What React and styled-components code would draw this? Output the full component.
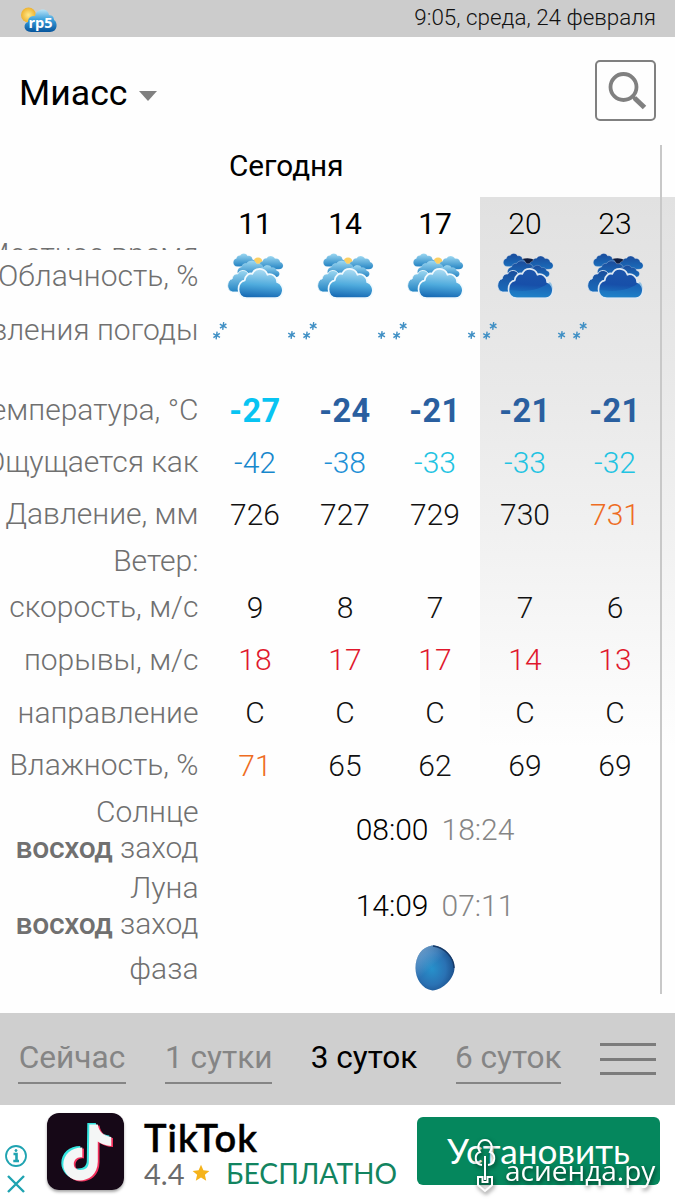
import React from "react";
import styled, { createGlobalStyle } from "styled-components";

const HOURS = [
  { hour: "11", night: false },
  { hour: "14", night: false },
  { hour: "17", night: false },
  { hour: "20", night: true },
  { hour: "23", night: true },
];

const BLACK = "#111";
const RED = "#e0182d";
const ORANGE = "#ee6c22";

const TEMPERATURE = [
  ["-27", "#08c4f2"],
  ["-24", "#2a5f9f"],
  ["-21", "#2a5f9f"],
  ["-21", "#2a5f9f"],
  ["-21", "#2a5f9f"],
];

const FEELS = [
  ["-42", "#1787cc"],
  ["-38", "#1e90d6"],
  ["-33", "#22c3e2"],
  ["-33", "#22c3e2"],
  ["-32", "#22c3e2"],
];

const PRESSURE = [
  ["726", BLACK],
  ["727", BLACK],
  ["729", BLACK],
  ["730", BLACK],
  ["731", ORANGE],
];

const SPEED = ["9", "8", "7", "7", "6"].map((v) => [v, BLACK]);
const GUSTS = ["18", "17", "17", "14", "13"].map((v) => [v, RED]);
const DIRECTION = ["С", "С", "С", "С", "С"].map((v) => [v, BLACK]);
const HUMIDITY = [
  ["71", ORANGE],
  ["65", BLACK],
  ["62", BLACK],
  ["69", BLACK],
  ["69", BLACK],
];

const CLOUD =
  "M13 40 C5 40 1 35 1 29 C1 23 5 19 10 18 C11 12 16 9 21 10 C25 2 39 2 43 11 C50 9 57 14 57 20 C64 22 66 28 65 32 C64 37 60 40 54 40 Z";

const CloudIcon = ({ night, id }) => {
  const front = `front-${id}`;
  const back = `back-${id}`;
  const edge = night ? "#dfe8f2" : "#f2fafe";
  return (
    <svg width="58" height="50" viewBox="0 0 58 50">
      <defs>
        <linearGradient id={front} x1="0.1" y1="0" x2="0" y2="1">
          <stop offset="0" stopColor={night ? "#1c55ab" : "#a9daf2"} />
          <stop offset="0.5" stopColor={night ? "#174fa9" : "#4fabdd"} />
          <stop offset="1" stopColor={night ? "#1d86cc" : "#0b5fae"} />
        </linearGradient>
        <linearGradient id={back} x1="0" y1="0" x2="0" y2="1">
          <stop offset="0" stopColor={night ? "#1a4c9c" : "#9bd7f1"} />
          <stop offset="1" stopColor={night ? "#1a6dbb" : "#2383c3"} />
        </linearGradient>
      </defs>
      {night ? (
        <path d="M26 8 q7 -2 13 1 l-3 6 h-8z" fill="#101c3c" />
      ) : (
        <circle cx="32" cy="11" r="4.6" fill="#fbcf63" />
      )}
      <g
        fill={`url(#${back})`}
        stroke={edge}
        strokeWidth="1"
        strokeOpacity={night ? 0.7 : 0.3}
      >
        <path transform="translate(7 1) scale(.34 .36)" d={CLOUD} />
        <path transform="translate(33 3.5) scale(.37 .37)" d={CLOUD} />
        <path transform="translate(11 8) scale(.46 .44)" d={CLOUD} />
        <path transform="translate(30 13) scale(.36 .33)" d={CLOUD} />
      </g>
      <g stroke={edge}>
        <path
          transform="translate(1.2 17) scale(.5 .6)"
          d={CLOUD}
          fill={`url(#${back})`}
          strokeWidth="1.6"
        />
        <path
          transform="translate(11.8 14.500) scale(.69 .82)"
          d={CLOUD}
          fill={`url(#${front})`}
          strokeWidth="2.4"
        />
      </g>
      {night && (
        <path
          d="M26 40 C38 40 48 36 54 31 C56.500 33 57 37 56 40 C55 45 52 46.500 48 46.500 H22 C17 46.500 13 43 13 39 Z"
          fill="#2188ce"
          opacity="0.4"
        />
      )}
    </svg>
  );
};

const Flake = ({ x, y }) => (
  <path
    transform={`translate(${x} ${y})`}
    d="M0.5 -3.8 L-0.5 3.8 M-3.4 -1.8 L3.4 1.8 M-3.2 2.2 L3.2 -2.2"
    stroke="#3f8fc4"
    strokeWidth="1.4"
    fill="none"
  />
);

const SnowIcon = ({ last }) => (
  <svg width="90" height="30" viewBox="0 0 90 30">
    <Flake x={6.6} y={20.5} />
    <Flake x={13.2} y={11} />
    {!last && <Flake x={81.6} y={20} />}
  </svg>
);

const MOON =
  "M18 1.5 C27 1 40 11 40.500 23 C41 34 29 46 18.500 46.500 C8 45 1.500 35 1.500 24 C1.500 12 8 3 18 1.500 Z";

const MoonIcon = () => (
  <svg width="42" height="48" viewBox="0 0 42 48">
    <defs>
      <radialGradient id="moon" cx="0.42" cy="0.52" r="0.65">
        <stop offset="0" stopColor="#2791cb" />
        <stop offset="0.55" stopColor="#2a72b4" />
        <stop offset="1" stopColor="#184680" />
      </radialGradient>
      <linearGradient id="moonShine" x1="0" y1="0" x2="0.4" y2="0.5">
        <stop offset="0" stopColor="#a6cdea" stopOpacity="0.7" />
        <stop offset="1" stopColor="#a6cdea" stopOpacity="0" />
      </linearGradient>
    </defs>
    <path d={MOON} fill="url(#moon)" />
    <path d={MOON} fill="url(#moonShine)" />
    <path d="M19 2 C30 3 40 13 40 24" stroke="#163a68" strokeWidth="1.4" fill="none" />
  </svg>
);

const LogoIcon = () => (
  <svg width="38" height="28" viewBox="0 0 38 28">
    <defs>
      <linearGradient id="logoCloud" x1="0" y1="0" x2="0" y2="1">
        <stop offset="0" stopColor="#b9e3f6" />
        <stop offset="0.45" stopColor="#3ba0dc" />
        <stop offset="1" stopColor="#06549c" />
      </linearGradient>
      <radialGradient id="logoSun">
        <stop offset="0" stopColor="#ffe98a" />
        <stop offset="1" stopColor="#eeb22f" />
      </radialGradient>
    </defs>
    <circle cx="8.500" cy="9" r="7.500" fill="url(#logoSun)" />
    <path
      d="M11 26 C3 26 3 17 8 16 C8 10 13 10 15 10 C16 2 28 1 29 9 C33 9 34 12 34 14 C38 16 38 26 30 26 Z"
      fill="url(#logoCloud)"
    />
    <text
      x="20.500"
      y="21.500"
      textAnchor="middle"
      fontFamily="Open Sans, sans-serif"
      fontSize="14.500"
      fontWeight="700"
      fill="#fff"
    >
      rp5
    </text>
  </svg>
);

const SearchIcon = () => (
  <svg width="58" height="58" viewBox="0 0 58 58" fill="none" stroke="#808080">
    <circle cx="26.500" cy="25" r="13" strokeWidth="3.800" />
    <path d="M35.500 34 L38 36.500" strokeWidth="3.200" />
    <path d="M37.500 36 L47.500 45.500" strokeWidth="5" />
  </svg>
);

const NOTE =
  "M40 10 H48.500 C49.500 17 54 21.500 62 22.500 V31.500 C56.500 31.500 52 29.700 48.500 27.200 V47 C48.500 60 39 66 30.500 66 C21 66 14 58.500 14 50 C14 40 22 33 33 33 V43 C28 42 24.500 45.500 24.500 49.500 C24.500 53 27 55.500 31 55.500 C36.500 55.500 39.500 52.500 39.500 47.500 Z";

const TikTokIcon = () => (
  <svg width="77" height="77" viewBox="0 0 77 77">
    <rect width="77" height="77" rx="12" fill="#160817" />
    <path transform="translate(0.3 0)" d={NOTE} fill="#35e5e0" />
    <path transform="translate(4 2.500)" d={NOTE} fill="#f2305c" />
    <path transform="translate(2.300 1.400)" d={NOTE} fill="#f4f6f6" />
  </svg>
);

const StarIcon = () => (
  <svg width="18" height="18" viewBox="0 0 18 18">
    <path
      d="M9 0.800 L11.400 6.300 L17.400 6.900 L12.900 10.800 L14.200 16.700 L9 13.600 L3.800 16.700 L5.100 10.800 L0.600 6.900 L6.600 6.300 Z"
      fill="#f5b31b"
    />
  </svg>
);

const InfoIcon = () => (
  <svg width="24" height="24" viewBox="0 0 24 24" fill="none" stroke="#1fa3b1">
    <circle cx="12" cy="12" r="10" strokeWidth="1.8" />
    <path d="M9.500 10 H12.500 V17 M9.300 17 H15" strokeWidth="2.600" />
    <circle cx="12" cy="6.500" r="1" fill="#1fa3b1" />
  </svg>
);

const CloseIcon = () => (
  <svg width="24" height="24" viewBox="0 0 24 24" stroke="#1fa3b1" strokeWidth="2.400">
    <path d="M4 4 L20 20 M20 4 L4 20" />
  </svg>
);

const ShovelIcon = () => (
  <svg width="24" height="56" viewBox="0 0 24 56" fill="none" stroke="#fff" strokeWidth="2">
    <path d="M9 27 C1 26 1 16 7 14 C3 8 7 2 12 2 C17 2 21 8 17 14 C23 16 23 26 15 27" />
    <path d="M12 18 V42 M5 39 H9.500 V44 H14.500 V39 H19 V47 L12 53 L5 47 Z" />
  </svg>
);

const ValueRow = ({ label, values, height, bold }) => (
  <Row $height={height}>
    <Label>{label}</Label>
    {values.map(([value, color], i) => (
      <Cell key={i} $color={color} $bold={bold}>
        {value}
      </Cell>
    ))}
  </Row>
);

const App = () => (
  <>
    <GlobalStyle />
    <Screen>
      <StatusBar>
        <LogoIcon />
        <span>9:05, среда, 24 февраля</span>
      </StatusBar>

      <Header>
        <City>
          Миасс
          <Arrow />
        </City>
        <SearchButton>
          <SearchIcon />
        </SearchButton>
      </Header>

      <Forecast>
        <Table>
          <Today>Сегодня</Today>
          <Row $height={53} $clip>
            <LowLabel>Местное время</LowLabel>
            {HOURS.map(({ hour, night }) => (
              <Hour key={hour} $night={night}>
                {hour}
              </Hour>
            ))}
          </Row>
          <Row $height={52}>
            <Label>Облачность, %</Label>
            {HOURS.map(({ hour, night }) => (
              <Cell key={hour}>
                <CloudIcon night={night} id={hour} />
              </Cell>
            ))}
          </Row>
          <Row $height={55}>
            <Label>Явления погоды</Label>
            {HOURS.map(({ hour }, i) => (
              <Cell key={hour}>
                <SnowIcon last={i === HOURS.length - 1} />
              </Cell>
            ))}
          </Row>
          <Gap />
          <ValueRow label="Температура, °C" values={TEMPERATURE} height={52} bold />
          <ValueRow label="Ощущается как" values={FEELS} height={52} />
          <ValueRow label="Давление, мм" values={PRESSURE} height={52} />
          <ValueRow label="Ветер:" values={[]} height={41} />
          <ValueRow label="скорость, м/с" values={SPEED} height={52} />
          <ValueRow label="порывы, м/с" values={GUSTS} height={53} />
          <ValueRow label="направление" values={DIRECTION} height={53} />
          <ValueRow label="Влажность, %" values={HUMIDITY} height={52} />
          <Row $height={76}>
            <Label $shift={2}>
              Солнце
              <br />
              <b>восход</b> заход
            </Label>
            <Wide>
              08:00 <Muted>18:24</Muted>
            </Wide>
          </Row>
          <Row $height={76}>
            <Label $shift={2}>
              Луна
              <br />
              <b>восход</b> заход
            </Label>
            <Wide>
              14:09 <Muted>07:11</Muted>
            </Wide>
          </Row>
          <Row $height={50}>
            <Label $shift={2}>фаза</Label>
            <Wide>
              <MoonIcon />
            </Wide>
          </Row>
        </Table>
      </Forecast>

      <Tabs>
        <Tab $width={108}>Сейчас</Tab>
        <Tab $width={107}>1 сутки</Tab>
        <Tab $width={105} $active>
          3 суток
        </Tab>
        <Tab $width={105}>6 суток</Tab>
        <Menu>
          <i />
          <i />
          <i />
        </Menu>
      </Tabs>

      <Ad>
        <AdControls>
          <InfoIcon />
          <CloseIcon />
        </AdControls>
        <AdLogo>
          <TikTokIcon />
        </AdLogo>
        <AdText>
          <AdTitle>TikTok</AdTitle>
          <AdInfo>
            <Rating>4.4</Rating>
            <StarIcon />
            <Price>БЕСПЛАТНО</Price>
          </AdInfo>
        </AdText>
        <Install>Установить</Install>
        <Watermark>
          <ShovelIcon />
          <span>асиенда.ру</span>
        </Watermark>
      </Ad>
    </Screen>
  </>
);

export default App;

const GlobalStyle = createGlobalStyle`
  body {
    margin: 0;
    background: #fff;
    font-family: Roboto, sans-serif;
  }

  svg {
    display: block;
    flex: none;
  }
`;

const Screen = styled.div`
  width: 675px;
  height: 1200px;
  overflow: hidden;
  display: flex;
  flex-direction: column;
  background: #fefefe;
`;

const StatusBar = styled.div`
  height: 37px;
  box-sizing: border-box;
  padding: 0 19px 4px 20px;
  display: flex;
  align-items: center;
  justify-content: space-between;
  background: #ccc;
  color: #111;
  font-size: 22.4px;
  font-weight: 300;

  > svg {
    margin-top: 6px;
  }
`;

const Header = styled.div`
  height: 108px;
  box-sizing: border-box;
  padding: 23px 19px 0;
  display: flex;
  justify-content: space-between;
  align-items: flex-start;
`;

const City = styled.div`
  display: flex;
  align-items: center;
  height: 66px;
  font-size: 35.7px;
  color: #000;
`;

const Arrow = styled.span`
  margin: 5px 0 0 11px;
  border: 9.5px solid transparent;
  border-top: 10px solid #808080;
  border-bottom: 0;
`;

const SearchButton = styled.div`
  width: 61px;
  height: 61px;
  box-sizing: border-box;
  border: 2px solid #808080;
  border-radius: 5px;
`;

const Forecast = styled.div`
  height: 868px;
  overflow: hidden;
  background: linear-gradient(#e1e1e1, #e9e9e9 35%, #f2f2f2 65%, #fefefe) 480px
    52px / 195px 550px no-repeat;
`;

const Table = styled.div`
  width: 662px;
  height: 849px;
  box-sizing: border-box;
  border-right: 2px solid #c8c8c8;
`;

const Today = styled.div`
  height: 52px;
  padding-left: 229px;
  line-height: 41px;
  font-size: 29.7px;
  color: #000;
`;

const Row = styled.div`
  display: grid;
  grid-template-columns: 199px repeat(5, 90px);
  grid-template-rows: 100%;
  height: ${(p) => p.$height}px;
  align-items: center;
  overflow: ${(p) => (p.$clip ? "hidden" : "visible")};
`;

const Label = styled.div`
  justify-self: end;
  padding-top: ${(p) => p.$shift || 0}px;
  padding-right: 0.5px;
  white-space: nowrap;
  text-align: right;
  font-size: 30px;
  font-weight: 300;
  line-height: 36px;
  color: #707070;

  b {
    font-weight: 500;
    letter-spacing: -0.3px;
  }
`;

const LowLabel = styled(Label)`
  align-self: start;
  padding-top: 39px;
`;

const Cell = styled.div`
  display: flex;
  justify-content: center;
  margin: 0 -11px 0 11px;
  padding-top: ${(p) => (p.$bold ? "1px" : "0")};
  font-size: ${(p) => (p.$bold ? "32.5px" : "30px")};
  font-weight: ${(p) => (p.$bold ? 700 : 300)};
  letter-spacing: ${(p) => (p.$bold ? "0.4px" : "0")};
  color: ${(p) => p.$color};
`;

const Hour = styled(Cell)`
  font-weight: ${(p) => (p.$night ? 300 : 400)};
  color: #000;
`;

const Wide = styled.div`
  grid-column: 2 / -1;
  display: flex;
  justify-content: center;
  gap: 13px;
  margin: 0 -11px 0 11px;
  font-size: 30px;
  font-weight: 300;
  color: #000;
`;

const Muted = styled.span`
  color: #858585;
`;

const Gap = styled.div`
  height: 27px;
`;

const Tabs = styled.div`
  height: 92px;
  flex: none;
  box-sizing: border-box;
  padding: 20px 19px 0 18px;
  display: flex;
  justify-content: space-between;
  align-items: flex-start;
  background: #cfcfcf;
`;

const Tab = styled.div`
  width: ${(p) => p.$width}px;
  height: 51px;
  box-sizing: border-box;
  display: flex;
  justify-content: center;
  line-height: 49px;
  font-size: 31.6px;
  white-space: nowrap;
  color: ${(p) => (p.$active ? "#000" : "#858585")};
  border-bottom: ${(p) => (p.$active ? "0" : "2px solid #858585")};
`;

const Menu = styled.div`
  width: 56px;
  padding-top: 10px;
  display: flex;
  flex-direction: column;
  gap: 11.5px;

  i {
    height: 3px;
    background: #7c7c7c;
  }
`;

const Ad = styled.div`
  position: relative;
  height: 95px;
  display: flex;
  align-items: flex-start;
  background: #fff;
`;

const AdControls = styled.div`
  width: 47px;
  padding: 39px 0 0 4px;
  box-sizing: border-box;
  display: flex;
  flex-direction: column;
  gap: 4px;
`;

const AdLogo = styled.div`
  margin-top: 8px;
  border-radius: 12px;
  box-shadow: 0 2px 3px rgba(0, 0, 0, 0.35);
`;

const AdText = styled.div`
  width: 273px;
  padding: 12px 0 0 20px;
  font-family: Lato, sans-serif;
`;

const AdTitle = styled.div`
  line-height: 40px;
  font-size: 38px;
  font-weight: 600;
  letter-spacing: 1px;
  -webkit-text-stroke: 0.4px #000;
  color: #000;
`;

const AdInfo = styled.div`
  display: flex;
  align-items: center;
  height: 32px;
  font-size: 29px;
`;

const Rating = styled.span`
  width: 48px;
  color: #6b6b6b;
`;

const Price = styled.span`
  margin-left: 16px;
  font-size: 28.2px;
  color: #128460;
`;

const Install = styled.div`
  width: 243px;
  height: 68px;
  margin-top: 12px;
  line-height: 66px;
  text-align: center;
  border-radius: 6px;
  background: #05875d;
  color: #fff;
  font-family: Lato, sans-serif;
  font-size: 35.2px;
`;

const Watermark = styled.div`
  position: absolute;
  left: 473px;
  top: 33px;
  display: flex;
  gap: 8px;
  color: #fff;
  font-family: "Open Sans", sans-serif;
  font-size: 28px;
  filter: drop-shadow(1px 2px 2px rgba(0, 0, 0, 0.6));

  span {
    line-height: 65px;
  }
`;
